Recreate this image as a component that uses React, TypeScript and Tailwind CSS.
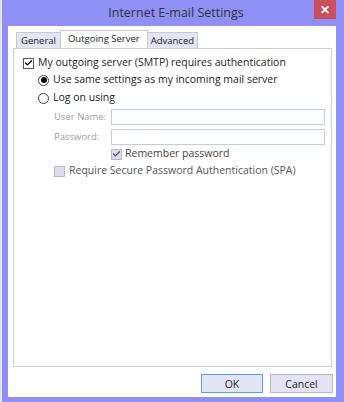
import { Check } from 'lucide-react';

const font = { fontFamily: '"Open Sans", "Noto Sans", sans-serif' };

function CheckBox({ checked, disabled }: { checked?: boolean; disabled?: boolean }) {
  return (
    <span
      className={`flex items-center justify-center w-[11px] h-[11px] border shrink-0 ${
        disabled ? 'border-[#b8b8c8] bg-[#dcdcf0]' : 'border-[#555] bg-white'
      }`}
    >
      {checked && <Check size={10} strokeWidth={3.5} className={disabled ? 'text-[#555]' : 'text-black'} />}
    </span>
  );
}

function Radio({ checked }: { checked?: boolean }) {
  return (
    <span className="flex items-center justify-center w-[11px] h-[11px] shrink-0 rounded-full border border-[#444] bg-white">
      {checked && <span className="w-[6px] h-[6px] rounded-full bg-black" />}
    </span>
  );
}

function App() {
  return (
    <div className="flex w-[344px] h-[402px] bg-[#e6e6ea] text-[10.5px] text-[#222] whitespace-nowrap" style={font}>
      <div className="w-[2px]" />
      <div className="flex flex-col flex-1 bg-[#8f8ff6]">
        <div className="relative flex items-center justify-center h-[26px]">
          <span className="text-[12.5px] text-[#333] pl-[6px]">Internet E-mail Settings</span>
          <span className="absolute right-[8px] top-0 flex items-center justify-center w-[22px] h-[19px] bg-[#c9505c] text-white text-[12px] font-bold">
            ✕
          </span>
        </div>
        <div className="flex flex-col flex-1 bg-white ml-[6px] mr-[8px] mb-[5px]">
          <div className="flex items-end h-[22px] pl-[8px] pt-[4px] text-[9.5px]">
            <div className="h-[16px] px-[4px] border border-b-0 border-[#c8c8d0] bg-[#e4e4f4] leading-[15px]">General</div>
            <div className="h-[18px] px-[7px] border border-b-0 border-[#c8c8d0] bg-white leading-[16px] -mx-[1px] relative z-10">
              Outgoing Server
            </div>
            <div className="h-[16px] px-[3px] border border-b-0 border-[#c8c8d0] bg-[#e4e4f4] leading-[15px]">Advanced</div>
          </div>
          <div className="flex flex-col h-[319px] ml-[5px] mr-[4px] border border-[#cfcfc8] pt-[8px] pl-[9px] pr-[6px]">
            <div className="flex items-center gap-[4px] h-[12px]">
              <CheckBox checked />
              <span>My outgoing server (SMTP) requires authentication</span>
            </div>
            <div className="flex items-center gap-[4px] h-[12px] mt-[5px] ml-[15px]">
              <Radio checked />
              <span>Use same settings as my incoming mail server</span>
            </div>
            <div className="flex items-center gap-[4px] h-[12px] mt-[6px] ml-[15px]">
              <Radio />
              <span>Log on using</span>
            </div>
            <div className="flex items-center h-[16px] mt-[5px] ml-[31px]">
              <span className="w-[57px] text-[9.5px] text-[#a0a0a0]">User Name:</span>
              <span className="flex-1 h-[16px] border border-[#b4d2e4]" />
            </div>
            <div className="flex items-center h-[16px] mt-[4px] ml-[31px]">
              <span className="w-[57px] text-[9.5px] text-[#a0a0a0]">Password:</span>
              <span className="flex-1 h-[16px] border border-[#b4d2e4]" />
            </div>
            <div className="flex items-center gap-[3px] h-[12px] mt-[3px] ml-[88px] text-[#444]">
              <CheckBox checked disabled />
              <span>Remember password</span>
            </div>
            <div className="flex items-center gap-[4px] h-[12px] mt-[5px] ml-[31px] text-[#555]">
              <CheckBox disabled />
              <span>Require Secure Password Authentication (SPA)</span>
            </div>
          </div>
          <div className="flex justify-end gap-[7px] mt-[7px] mr-[3px]">
            <button className="w-[62px] h-[19px] border border-[#4fa3e8] bg-[#e4e4f6] text-[10.5px] leading-[16px]">OK</button>
            <button className="w-[63px] h-[19px] border border-[#b8b8b8] bg-[#e4e4f6] text-[10.5px] leading-[16px]">Cancel</button>
          </div>
        </div>
      </div>
    </div>
  );
}

export default App;
